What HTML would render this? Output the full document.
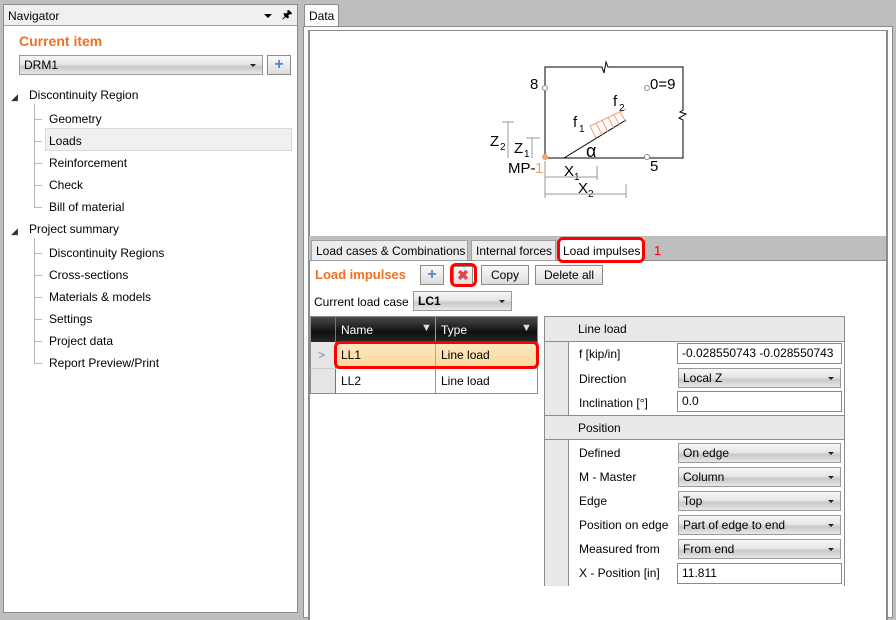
<!DOCTYPE html>
<html><head><meta charset="utf-8"><style>
*{box-sizing:border-box;margin:0;padding:0}
body{width:896px;height:616px;background:#bebebe;font-family:"Liberation Sans",sans-serif;font-size:12px;color:#000;position:relative;overflow:hidden}
.a{position:absolute}
.t{position:absolute;white-space:nowrap;line-height:14px}
.combo{position:absolute;border:1px solid #9a9a9a;background:linear-gradient(#f6f6f6 0%,#e6e6e6 45%,#c8c8c8 60%,#e8e8e8 100%);height:20px;padding-left:4px;line-height:18px}
.combo:after{content:"";position:absolute;right:6px;top:8px;border:3px solid transparent;border-top:3px solid #222}
.btn{position:absolute;border:1px solid #8a8a8a;background:linear-gradient(#fafafa,#dcdcdc);height:20px;text-align:center;line-height:18px}
.box{position:absolute;border:1px solid #8a8a8a;background:#fff;height:21px;padding-left:4px;line-height:19px}
.red{position:absolute;border:3px solid #f00;border-radius:6px}
.tree{position:absolute;background:#b8b8b8}
</style></head><body>
<div class="a" style="left:3px;top:4px;width:295px;height:609px;background:#fff;border:1px solid #8c8c8c"></div>
<div class="a" style="left:4px;top:5px;width:293px;height:21px;background:#f0f0f0;border-bottom:1px solid #a0a0a0"></div>
<div class="t" style="left:8px;top:9px">Navigator</div>
<div class="a" style="left:264px;top:14px;border:4px solid transparent;border-top:4px solid #000"></div>
<div class="t" style="left:282px;top:8px;font-size:11px;font-weight:bold">&#x1F588;</div>
<div class="t" style="left:19px;top:34px;color:#f07020;font-weight:bold;font-size:14px">Current item</div>
<div class="combo" style="left:19px;top:55px;width:244px">DRM1</div>
<div class="btn" style="left:267px;top:55px;width:24px;color:#4a8ad0;font-weight:bold;font-size:16px">+</div>
<div class="t" style="left:11px;top:90px;font-size:9px;color:#333">◢</div>
<div class="t" style="left:29px;top:88px">Discontinuity Region</div>
<div class="tree" style="left:34px;top:104px;width:1px;height:103px"></div>
<div class="a" style="left:45px;top:128px;width:247px;height:23px;background:#f0f0f0;border:1px solid #dadada"></div>
<div class="tree" style="left:34px;top:119px;width:8px;height:1px"></div>
<div class="tree" style="left:34px;top:141px;width:8px;height:1px"></div>
<div class="tree" style="left:34px;top:163px;width:8px;height:1px"></div>
<div class="tree" style="left:34px;top:185px;width:8px;height:1px"></div>
<div class="tree" style="left:34px;top:207px;width:8px;height:1px"></div>
<div class="t" style="left:49px;top:112px">Geometry</div>
<div class="t" style="left:49px;top:134px">Loads</div>
<div class="t" style="left:49px;top:156px">Reinforcement</div>
<div class="t" style="left:49px;top:178px">Check</div>
<div class="t" style="left:49px;top:200px">Bill of material</div>
<div class="t" style="left:11px;top:224px;font-size:9px;color:#333">◢</div>
<div class="t" style="left:29px;top:222px">Project summary</div>
<div class="tree" style="left:34px;top:238px;width:1px;height:125px"></div>
<div class="tree" style="left:34px;top:253px;width:8px;height:1px"></div>
<div class="tree" style="left:34px;top:275px;width:8px;height:1px"></div>
<div class="tree" style="left:34px;top:297px;width:8px;height:1px"></div>
<div class="tree" style="left:34px;top:319px;width:8px;height:1px"></div>
<div class="tree" style="left:34px;top:341px;width:8px;height:1px"></div>
<div class="tree" style="left:34px;top:363px;width:8px;height:1px"></div>
<div class="t" style="left:49px;top:246px">Discontinuity Regions</div>
<div class="t" style="left:49px;top:268px">Cross-sections</div>
<div class="t" style="left:49px;top:290px">Materials &amp; models</div>
<div class="t" style="left:49px;top:312px">Settings</div>
<div class="t" style="left:49px;top:334px">Project data</div>
<div class="t" style="left:49px;top:356px">Report Preview/Print</div>

<div class="a" style="left:304px;top:4px;width:35px;height:23px;background:#fbfbfb;border:1px solid #8c8c8c;border-bottom:none;border-radius:2px 2px 0 0"></div>
<div class="t" style="left:309px;top:9px">Data</div>
<div class="a" style="left:303px;top:26px;width:590px;height:592px;background:#fbfbfb;border:1px solid #8c8c8c"></div>
<div class="a" style="left:308px;top:30px;width:580px;height:590px;background:#fff;border:1px solid #8c8c8c;border-width:1px 2px 0 2px"></div>

<svg class="a" style="left:490px;top:40px" width="220" height="160" font-family="Liberation Sans" font-size="15">
<path d="M55 27 V118 H193 V80 L189 78 L196 74 L190 72 L193 70 V27 H118 L116 22 L114 33 L112 27 Z" fill="none" stroke="#000" stroke-width="1"/>
<circle cx="55" cy="48" r="2.5" fill="#fff" stroke="#888"/>
<circle cx="157" cy="48" r="2.5" fill="#fff" stroke="#888"/>
<circle cx="157" cy="117" r="2.5" fill="#fff" stroke="#888"/>
<circle cx="55" cy="117" r="3" fill="#f7a070"/>
<line x1="74" y1="118" x2="136" y2="80" stroke="#000"/>
<g stroke="#f7a070" stroke-width="1"><line x1="100" y1="86" x2="136" y2="69"/>
<line x1="100" y1="86" x2="106" y2="98"/><line x1="106" y1="83" x2="112" y2="95"/><line x1="112" y1="80" x2="118" y2="92"/><line x1="118" y1="77" x2="124" y2="89"/><line x1="124" y1="75" x2="130" y2="86"/><line x1="130" y1="72" x2="136" y2="82"/></g>
<text x="40" y="49">8</text><text x="160" y="49">0=9</text><text x="160" y="131">5</text>
<text x="83" y="87">f</text><text x="89" y="92" font-size="10">1</text>
<text x="123" y="66">f</text><text x="129" y="71" font-size="10">2</text>
<text x="96" y="117" font-size="18">α</text>
<text x="0" y="106">Z</text><text x="10" y="110" font-size="10">2</text>
<text x="24" y="113">Z</text><text x="34" y="117" font-size="10">1</text>
<text x="18" y="133">MP-</text><text x="45" y="133" fill="#f7a070">1</text>
<text x="74" y="136">X</text><text x="84" y="140" font-size="10">1</text>
<text x="88" y="153">X</text><text x="98" y="157" font-size="10">2</text>
<g stroke="#999"><line x1="18" y1="82" x2="18" y2="118"/><line x1="12" y1="82" x2="24" y2="82"/><line x1="42" y1="98" x2="42" y2="118"/><line x1="36" y1="98" x2="50" y2="98"/>
<line x1="55" y1="137" x2="107" y2="137"/><line x1="107" y1="126" x2="107" y2="140"/><line x1="55" y1="154" x2="136" y2="154"/><line x1="136" y1="144" x2="136" y2="158"/><line x1="55" y1="121" x2="55" y2="158"/></g>
</svg>

<div class="a" style="left:309px;top:236px;width:577px;height:25px;background:#bebebe;border-bottom:1px solid #8c8c8c"></div>
<div class="a" style="left:311px;top:240px;width:157px;height:21px;background:#ececec;border:1px solid #a0a0a0"></div>
<div class="t" style="left:316px;top:244px">Load cases &amp; Combinations</div>
<div class="a" style="left:471px;top:240px;width:85px;height:21px;background:#ececec;border:1px solid #a0a0a0"></div>
<div class="t" style="left:476px;top:244px">Internal forces</div>
<div class="a" style="left:558px;top:238px;width:86px;height:24px;background:#fff"></div>
<div class="t" style="left:563px;top:244px">Load impulses</div>
<div class="red" style="left:557px;top:237px;width:88px;height:26px"></div>
<div class="t" style="left:654px;top:244px;color:#f00;font-size:13px">1</div>

<div class="t" style="left:315px;top:268px;color:#f07020;font-weight:bold;font-size:13px">Load impulses</div>
<div class="btn" style="left:420px;top:265px;width:24px;color:#4a8ad0;font-weight:bold;font-size:16px">+</div>
<div class="btn" style="left:453px;top:266px;width:20px;color:#e04848;font-weight:bold;font-size:14px;line-height:17px">✖</div>
<div class="red" style="left:450px;top:263px;width:27px;height:24px"></div>
<div class="btn" style="left:481px;top:265px;width:48px">Copy</div>
<div class="btn" style="left:535px;top:265px;width:68px">Delete all</div>
<div class="t" style="left:314px;top:295px">Current load case</div>
<div class="combo" style="left:413px;top:291px;width:99px;font-weight:bold">LC1</div>

<div class="a" style="left:310px;top:316px;width:228px;height:78px;border:1px solid #8c8c8c;background:#fff"></div>
<div class="a" style="left:311px;top:317px;width:226px;height:25px;background:linear-gradient(#4a4a4a,#101010 60%,#262626)"></div>
<div class="a" style="left:335px;top:317px;width:1px;height:76px;background:#777"></div>
<div class="a" style="left:435px;top:317px;width:1px;height:76px;background:#999"></div>
<div class="t" style="left:341px;top:323px;color:#fff">Name</div>
<div class="t" style="left:441px;top:323px;color:#fff">Type</div>
<div class="t" style="left:421px;top:321px;color:#ddd;font-size:11px">▼</div>
<div class="t" style="left:521px;top:321px;color:#ddd;font-size:11px">▼</div>
<div class="a" style="left:311px;top:342px;width:24px;height:51px;background:#e6e6e6"></div>
<div class="a" style="left:311px;top:368px;width:226px;height:1px;background:#ccc"></div>
<div class="t" style="left:318px;top:348px;color:#888">&gt;</div>
<div class="a" style="left:336px;top:343px;width:201px;height:25px;background:linear-gradient(#fde8c4,#fbd898)"></div>
<div class="a" style="left:435px;top:343px;width:1px;height:25px;background:#aaa"></div>
<div class="red" style="left:334px;top:341px;width:205px;height:28px"></div>
<div class="t" style="left:341px;top:348px">LL1</div>
<div class="t" style="left:441px;top:348px">Line load</div>
<div class="t" style="left:341px;top:374px">LL2</div>
<div class="t" style="left:441px;top:374px">Line load</div>
<div class="t" style="left:545px;top:346px;color:#f00;font-size:13px">2</div>

<div class="a" style="left:544px;top:316px;width:301px;height:270px;background:#fff;border:1px solid #8c8c8c;border-bottom:none"></div>
<div class="a" style="left:545px;top:317px;width:24px;height:269px;background:#e8e8e8;border-right:1px solid #8c8c8c"></div>
<div class="a" style="left:545px;top:317px;width:299px;height:25px;background:#e8e8e8;border-bottom:1px solid #8c8c8c"></div>
<div class="a" style="left:545px;top:415px;width:299px;height:25px;background:#e8e8e8;border-top:1px solid #8c8c8c;border-bottom:1px solid #8c8c8c"></div>
<div class="t" style="left:578px;top:322px">Line load</div>
<div class="t" style="left:578px;top:421px">Position</div>
<div class="t" style="left:579px;top:347px">f [kip/in]</div>
<div class="t" style="left:579px;top:372px">Direction</div>
<div class="t" style="left:579px;top:396px">Inclination [°]</div>
<div class="t" style="left:579px;top:446px">Defined</div>
<div class="t" style="left:579px;top:470px">M - Master</div>
<div class="t" style="left:579px;top:494px">Edge</div>
<div class="t" style="left:579px;top:518px">Position on edge</div>
<div class="t" style="left:579px;top:542px">Measured from</div>
<div class="t" style="left:579px;top:566px">X - Position [in]</div>
<div class="box" style="left:677px;top:343px;width:165px">-0.028550743 -0.028550743</div>
<div class="combo" style="left:678px;top:368px;width:163px">Local Z</div>
<div class="box" style="left:677px;top:391px;width:165px">0.0</div>
<div class="combo" style="left:678px;top:443px;width:163px">On edge</div>
<div class="combo" style="left:678px;top:467px;width:163px">Column</div>
<div class="combo" style="left:678px;top:491px;width:163px">Top</div>
<div class="combo" style="left:678px;top:515px;width:163px">Part of edge to end</div>
<div class="combo" style="left:678px;top:539px;width:163px">From end</div>
<div class="box" style="left:677px;top:563px;width:165px">11.811</div>
</body></html>
